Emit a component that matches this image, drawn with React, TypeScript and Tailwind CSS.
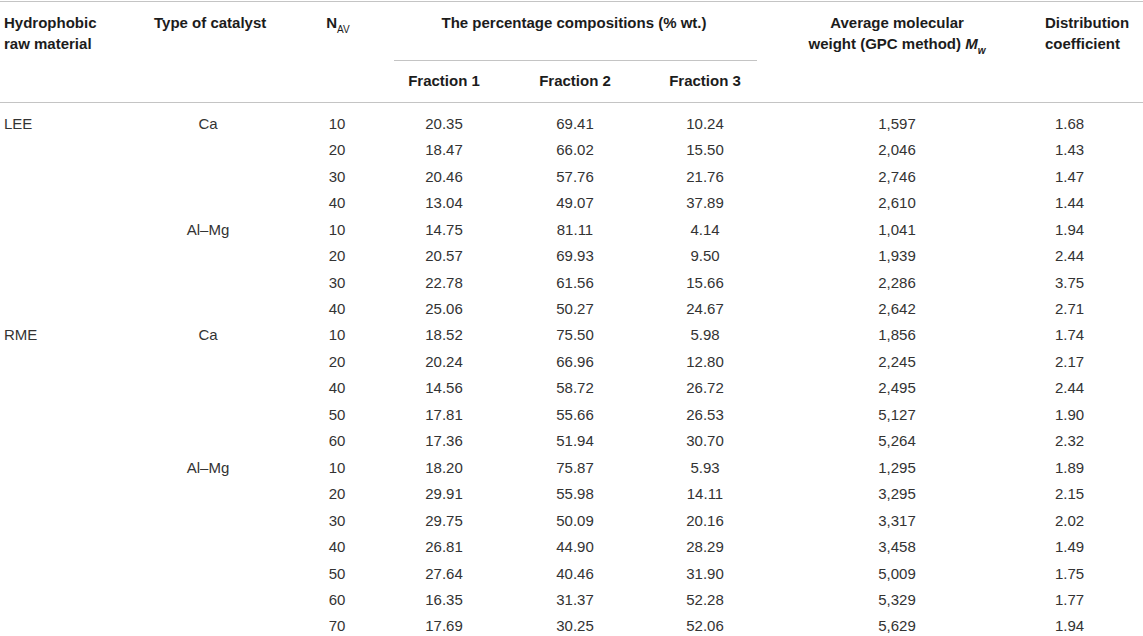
import React from "react";

type Row = [string, string, string, string, string, string];
type Group = { material: string; catalyst: string; rows: Row[] };

const groups: Group[] = [
  {
    material: "LEE",
    catalyst: "Ca",
    rows: [
      ["10", "20.35", "69.41", "10.24", "1,597", "1.68"],
      ["20", "18.47", "66.02", "15.50", "2,046", "1.43"],
      ["30", "20.46", "57.76", "21.76", "2,746", "1.47"],
      ["40", "13.04", "49.07", "37.89", "2,610", "1.44"],
    ],
  },
  {
    material: "",
    catalyst: "Al–Mg",
    rows: [
      ["10", "14.75", "81.11", "4.14", "1,041", "1.94"],
      ["20", "20.57", "69.93", "9.50", "1,939", "2.44"],
      ["30", "22.78", "61.56", "15.66", "2,286", "3.75"],
      ["40", "25.06", "50.27", "24.67", "2,642", "2.71"],
    ],
  },
  {
    material: "RME",
    catalyst: "Ca",
    rows: [
      ["10", "18.52", "75.50", "5.98", "1,856", "1.74"],
      ["20", "20.24", "66.96", "12.80", "2,245", "2.17"],
      ["40", "14.56", "58.72", "26.72", "2,495", "2.44"],
      ["50", "17.81", "55.66", "26.53", "5,127", "1.90"],
      ["60", "17.36", "51.94", "30.70", "5,264", "2.32"],
    ],
  },
  {
    material: "",
    catalyst: "Al–Mg",
    rows: [
      ["10", "18.20", "75.87", "5.93", "1,295", "1.89"],
      ["20", "29.91", "55.98", "14.11", "3,295", "2.15"],
      ["30", "29.75", "50.09", "20.16", "3,317", "2.02"],
      ["40", "26.81", "44.90", "28.29", "3,458", "1.49"],
      ["50", "27.64", "40.46", "31.90", "5,009", "1.75"],
      ["60", "16.35", "31.37", "52.28", "5,329", "1.77"],
      ["70", "17.69", "30.25", "52.06", "5,629", "1.94"],
    ],
  },
];

export default function App() {
  let idx = 0;
  return (
    <div className="w-[1143px] h-[636px] overflow-hidden bg-white pt-[1px] font-['Liberation_Sans',Arial,sans-serif]">
      <table className="w-[1143px] table-fixed border-collapse text-[15px]">
        <colgroup>
          <col className="w-[150px]" />
          <col className="w-[124px]" />
          <col className="w-[105px]" />
          <col className="w-[130px]" />
          <col className="w-[132px]" />
          <col className="w-[128px]" />
          <col className="w-[256px]" />
          <col className="w-[118px]" />
        </colgroup>
        <thead className="border-t border-b border-[#c4c4c4] text-[#1c1c1c]">
          <tr className="h-[59px]">
            <th rowSpan={2} className="p-0 pl-[4px] pt-[10px] align-top text-left font-bold leading-[21px]">
              Hydrophobic
              <br />
              raw material
            </th>
            <th rowSpan={2} className="p-0 pl-[4px] pt-[10px] align-top text-left font-bold leading-[21px]">
              Type of catalyst
            </th>
            <th rowSpan={2} className="p-0 pl-[23px] pt-[10px] align-top text-center font-bold leading-[21px]">
              N<sub className="text-[10px] font-normal align-[-2px]">AV</sub>
            </th>
            <th colSpan={3} className="p-0 align-top text-center font-bold leading-[21px]">
              <div className="h-[58px] pt-[10px]">The percentage compositions (% wt.)</div>
              <div className="ml-[15px] mr-[12px] border-t border-[#c4c4c4]" />
            </th>
            <th rowSpan={2} className="p-0 pt-[10px] align-top text-center font-bold leading-[21px]">
              Average molecular
              <br />
              weight (GPC method){" "}
              <i>
                M<sub className="text-[10px] align-[-2px]">w</sub>
              </i>
            </th>
            <th rowSpan={2} className="p-0 pl-[20px] pt-[10px] align-top text-left font-bold leading-[21px]">
              Distribution
              <br />
              coefficient
            </th>
          </tr>
          <tr className="h-[41px]">
            <th className="p-0 pb-[2px] text-center font-bold leading-[21px]">Fraction 1</th>
            <th className="p-0 pb-[2px] text-center font-bold leading-[21px]">Fraction 2</th>
            <th className="p-0 pb-[2px] text-center font-bold leading-[21px]">Fraction 3</th>
          </tr>
        </thead>
        <tbody className="text-[#333333]">
          {groups.map((g) =>
            g.rows.map((r, i) => {
              const first = idx === 0;
              idx++;
              const rowCls = first ? "h-[35.3px]" : "h-[26.45px]";
              const cellAlign = first ? "align-bottom" : "align-middle";
              return (
                <tr key={g.material + g.catalyst + r[0] + idx} className={rowCls}>
                  <td className={`p-0 pl-[4px] leading-[26.45px] text-left ${cellAlign}`}>
                    {i === 0 ? g.material : ""}
                  </td>
                  <td className={`p-0 pr-[8px] leading-[26.45px] text-center ${cellAlign}`}>
                    {i === 0 ? g.catalyst : ""}
                  </td>
                  <td className={`p-0 pl-[21px] leading-[26.45px] text-center ${cellAlign}`}>{r[0]}</td>
                  <td className={`p-0 leading-[26.45px] text-center ${cellAlign}`}>{r[1]}</td>
                  <td className={`p-0 leading-[26.45px] text-center ${cellAlign}`}>{r[2]}</td>
                  <td className={`p-0 leading-[26.45px] text-center ${cellAlign}`}>{r[3]}</td>
                  <td className={`p-0 leading-[26.45px] text-center ${cellAlign}`}>{r[4]}</td>
                  <td className={`p-0 pl-[30px] leading-[26.45px] text-left ${cellAlign}`}>{r[5]}</td>
                </tr>
              );
            })
          )}
        </tbody>
      </table>
    </div>
  );
}
